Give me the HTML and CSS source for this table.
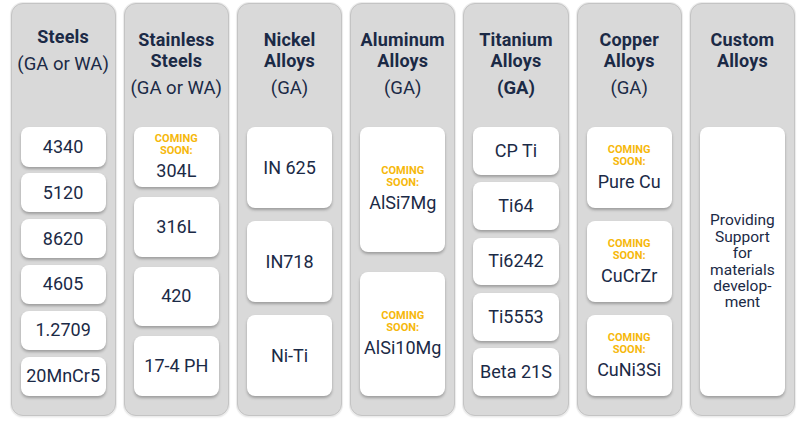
FILE: index.html
```html
<!DOCTYPE html>
<html lang="en">
<head>
<meta charset="utf-8">
<title>Materials</title>
<link rel="stylesheet" href="styles.css">
</head>
<body>
<div class="board">
  <section class="panel">
    <header class="head head--tight">
      <h2 class="title">Steels</h2>
      <p class="sub">(GA or WA)</p>
    </header>
    <div class="cards cards--6">
      <div class="card"><span class="name">4340</span></div>
      <div class="card"><span class="name">5120</span></div>
      <div class="card"><span class="name">8620</span></div>
      <div class="card"><span class="name">4605</span></div>
      <div class="card"><span class="name">1.2709</span></div>
      <div class="card"><span class="name">20MnCr5</span></div>
    </div>
  </section>
  <section class="panel">
    <header class="head">
      <h2 class="title">Stainless<br>Steels</h2>
      <p class="sub">(GA or WA)</p>
    </header>
    <div class="cards cards--4">
      <div class="card"><span class="soon">COMING</span><span class="soon soon--last">SOON:</span><span class="name">304L</span></div>
      <div class="card"><span class="name">316L</span></div>
      <div class="card"><span class="name">420</span></div>
      <div class="card"><span class="name">17-4 PH</span></div>
    </div>
  </section>
  <section class="panel">
    <header class="head">
      <h2 class="title">Nickel<br>Alloys</h2>
      <p class="sub">(GA)</p>
    </header>
    <div class="cards cards--3">
      <div class="card"><span class="name">IN 625</span></div>
      <div class="card"><span class="name">IN718</span></div>
      <div class="card"><span class="name">Ni-Ti</span></div>
    </div>
  </section>
  <section class="panel">
    <header class="head">
      <h2 class="title">Aluminum<br>Alloys</h2>
      <p class="sub">(GA)</p>
    </header>
    <div class="cards cards--2">
      <div class="card"><span class="soon">COMING</span><span class="soon soon--last">SOON:</span><span class="name">AlSi7Mg</span></div>
      <div class="card"><span class="soon">COMING</span><span class="soon soon--last">SOON:</span><span class="name">AlSi10Mg</span></div>
    </div>
  </section>
  <section class="panel">
    <header class="head">
      <h2 class="title">Titanium<br>Alloys</h2>
      <p class="sub sub--bold">(GA)</p>
    </header>
    <div class="cards cards--5">
      <div class="card"><span class="name">CP Ti</span></div>
      <div class="card"><span class="name">Ti64</span></div>
      <div class="card"><span class="name">Ti6242</span></div>
      <div class="card"><span class="name">Ti5553</span></div>
      <div class="card"><span class="name">Beta 21S</span></div>
    </div>
  </section>
  <section class="panel">
    <header class="head">
      <h2 class="title">Copper<br>Alloys</h2>
      <p class="sub">(GA)</p>
    </header>
    <div class="cards cards--3">
      <div class="card"><span class="soon">COMING</span><span class="soon soon--last">SOON:</span><span class="name">Pure Cu</span></div>
      <div class="card"><span class="soon">COMING</span><span class="soon soon--last">SOON:</span><span class="name">CuCrZr</span></div>
      <div class="card"><span class="soon">COMING</span><span class="soon soon--last">SOON:</span><span class="name">CuNi3Si</span></div>
    </div>
  </section>
  <section class="panel">
    <header class="head">
      <h2 class="title">Custom<br>Alloys</h2>
    </header>
    <div class="cards">
      <div class="card"><span class="note">Providing<br>Support<br>for<br>materials<br>develop-<br>ment</span></div>
    </div>
  </section>
</div>
</body>
</html>
```
FILE: styles.css
```css
* { box-sizing: border-box; }
html, body {
  margin: 0;
  padding: 0;
  background: #ffffff;
}
body {
  font-family: Roboto, "Liberation Sans", sans-serif;
  color: #1b2a46;
  width: 800px;
  height: 424px;
  overflow: hidden;
}
.board {
  display: grid;
  grid-template-columns: repeat(7, 1fr);
  gap: 8px;
  padding: 3px 5px 0 10.5px;
  height: 416px;
}
.panel {
  display: flex;
  flex-direction: column;
  background: #d9d9d9;
  border: 1px solid #c4c4c4;
  border-radius: 12px;
  box-shadow: 0 0 0 1px #ececec, 0 1px 2px rgba(0,0,0,0.15);
  padding: 0 9px 19px;
  height: 413px;
}
.head {
  height: 123px;
  margin: 0 -9px;
  padding-top: 25px;
  text-align: center;
  white-space: nowrap;
}
.head--tight { padding-top: 22px; }
.title {
  margin: 0;
  font-size: 18px;
  line-height: 21px;
  font-weight: 700;
  letter-spacing: 0.15px;
}
.sub {
  margin: 6px 0 0;
  font-size: 18.5px;
  line-height: 22px;
  font-weight: 400;
}
.sub--bold { font-weight: 700; }
.cards {
  flex: 1;
  display: flex;
  flex-direction: column;
  gap: 20px;
}
.cards--6 { gap: 6.4px; }
.cards--5 { gap: 7.5px; }
.cards--4 { gap: 10px; }
.cards--3 { gap: 13px; }
.cards--2 { gap: 20px; }
.card {
  flex: 1;
  background: #ffffff;
  border-radius: 8px;
  box-shadow: 0 2px 3px rgba(0,0,0,0.28);
  display: flex;
  flex-direction: column;
  align-items: center;
  justify-content: center;
  text-align: center;
}
.soon {
  display: block;
  color: #f6b80c;
  font-size: 11px;
  line-height: 12px;
  height: 12px;
  font-weight: 700;
}
.soon--last { margin-bottom: 4px; }
.name {
  font-size: 18px;
  line-height: 20px;
  white-space: nowrap;
}
.note {
  font-size: 15.5px;
  line-height: 16.4px;
}
```
